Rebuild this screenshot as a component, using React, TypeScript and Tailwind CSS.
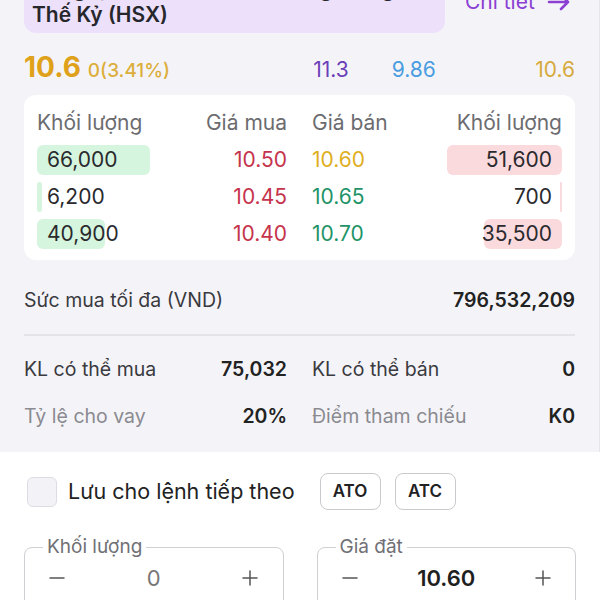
import { Minus, Plus } from "lucide-react";

type Level = {
  bidVol: string;
  bidBar: number;
  bid: string;
  ask: string;
  askColor: string;
  askVol: string;
  askBar: number;
};

const levels: Level[] = [
  { bidVol: "66,000", bidBar: 113, bid: "10.50", ask: "10.60", askColor: "text-[#dfae1f]", askVol: "51,600", askBar: 115 },
  { bidVol: "6,200", bidBar: 5, bid: "10.45", ask: "10.65", askColor: "text-[#1f9468]", askVol: "700", askBar: 2 },
  { bidVol: "40,900", bidBar: 68, bid: "10.40", ask: "10.70", askColor: "text-[#1f9468]", askVol: "35,500", askBar: 78 },
];

function Stat({ label, value, dim }: { label: string; value: string; dim?: boolean }) {
  return (
    <div className="flex h-[24px] items-center justify-between">
      <span className={dim ? "text-[#8a8a90]" : "text-[#3a3a3f]"}>{label}</span>
      <span className="font-semibold text-[#222]">{value}</span>
    </div>
  );
}

function Stepper({ label, value, bold }: { label: string; value: string; bold?: boolean }) {
  return (
    <fieldset className="rounded-lg border border-[#cfcfd4] px-5 pb-4">
      <legend className="ml-[-2px] px-1 text-[19px] leading-[24px] text-[#707075]">{label}</legend>
      <div className="mt-[5px] flex items-center justify-between">
        <Minus size={24} strokeWidth={1.5} className="text-[#555]" />
        <span className={`text-[22px] leading-[28px] ${bold ? "font-semibold text-[#1f1f1f]" : "text-[#777]"}`}>{value}</span>
        <Plus size={24} strokeWidth={1.5} className="text-[#555]" />
      </div>
    </fieldset>
  );
}

export default function App() {
  return (
    <div className="h-[600px] w-[600px] overflow-hidden bg-white font-['Inter',sans-serif]">
      <div className="flow-root h-[452px] border-r border-[#e6e6ea] bg-[#f4f4f8] px-6">
        <div className="mt-[-30px] flex items-center gap-5">
          <div className="flex-1 rounded-b-xl bg-[#ece0fb] px-2 pb-[5px] pt-[6px] text-[21px] font-semibold leading-[26px] text-[#26262b]">
            <div>Công ty Cổ phần Đầu tư Năng lượng</div>
            <div>Thế Kỷ (HSX)</div>
          </div>
          <div className="flex w-[110px] items-center gap-3 text-[21px] leading-[26px] text-[#8b3fd3]">
            Chi tiết
            <svg width="24" height="18" viewBox="0 0 24 18" fill="none" stroke="#8b3fd3" strokeWidth="2.6" strokeLinecap="round" strokeLinejoin="round">
              <path d="M2 9h19M14 2l7 7-7 7" />
            </svg>
          </div>
        </div>

        <div className="mt-[17px] flex h-[34px] items-baseline">
          <span className="text-[28px] font-bold leading-[34px] text-[#e0a11a]">10.6</span>
          <span className="ml-[7px] text-[19px] font-medium text-[#dcae3c]">0(3.41%)</span>
          <span className="ml-[143px] text-[21px] text-[#6b3fb8]">11.3</span>
          <span className="ml-[43px] text-[21px] text-[#4a9ce0]">9.86</span>
          <span className="ml-auto text-[21px] text-[#d6aa3c]">10.6</span>
        </div>

        <div className="mt-[11px] rounded-xl bg-white px-[13px] pb-[8px] pt-[9px] text-[21px]">
          <div className="grid h-[37px] grid-cols-2 items-center gap-x-[25px]">
            <div className="flex justify-between text-[#6c6c70]">
              <span>Khối lượng</span>
              <span>Giá mua</span>
            </div>
            <div className="flex justify-between text-[#6c6c70]">
              <span>Giá bán</span>
              <span>Khối lượng</span>
            </div>
          </div>
          {levels.map((l) => (
            <div key={l.bid} className="grid h-[37px] grid-cols-2 items-center gap-x-[25px]">
              <div className="flex items-center justify-between">
                <div className="relative flex h-[30px] items-center pl-[10px]">
                  <div className="absolute left-0 top-0 h-full rounded-md bg-[#d6f5df]" style={{ width: l.bidBar }} />
                  <span className="relative text-[#2a2a2e]">{l.bidVol}</span>
                </div>
                <span className="text-[#c5344c]">{l.bid}</span>
              </div>
              <div className="flex items-center justify-between">
                <span className={l.askColor}>{l.ask}</span>
                <div className="relative flex h-[30px] w-[140px] items-center justify-end pr-[10px]">
                  <div className="absolute right-0 top-0 h-full rounded-md bg-[#fadadd]" style={{ width: l.askBar }} />
                  <span className="relative text-[#2a2a2e]">{l.askVol}</span>
                </div>
              </div>
            </div>
          ))}
        </div>

        <div className="mt-[29px] flex h-[24px] items-center justify-between text-[19.5px]">
          <span className="text-[#3a3a3f]">Sức mua tối đa (VND)</span>
          <span className="font-semibold text-[#222]">796,532,209</span>
        </div>
        <div className="mt-[21px] h-[2px] bg-[#e4e4e8]" />

        <div className="mt-[22px] grid grid-cols-2 gap-x-[25px] gap-y-[23px] text-[19.5px]">
          <Stat label="KL có thể mua" value="75,032" />
          <Stat label="KL có thể bán" value="0" />
          <Stat label="Tỷ lệ cho vay" value="20%" dim />
          <Stat label="Điểm tham chiếu" value="K0" dim />
        </div>
      </div>

      <div className="px-6">
        <div className="mt-[21px] flex h-[37px] items-center">
          <div className="ml-[3px] h-[30px] w-[30px] rounded-md border border-[#dcdce2] bg-[#f3f3f7]" />
          <span className="ml-[11px] text-[21.5px] text-[#222]">Lưu cho lệnh tiếp theo</span>
          <button className="ml-[25px] h-[37px] w-[61px] rounded-lg border border-[#c9c9ce] text-[17px] font-semibold text-[#222]">
            ATO
          </button>
          <button className="ml-[14px] h-[37px] w-[61px] rounded-lg border border-[#c9c9ce] text-[17px] font-semibold text-[#222]">
            ATC
          </button>
        </div>

        <div className="mt-[25px] grid grid-cols-2 gap-x-[33px]">
          <Stepper label="Khối lượng" value="0" />
          <Stepper label="Giá đặt" value="10.60" bold />
        </div>
      </div>
    </div>
  );
}
